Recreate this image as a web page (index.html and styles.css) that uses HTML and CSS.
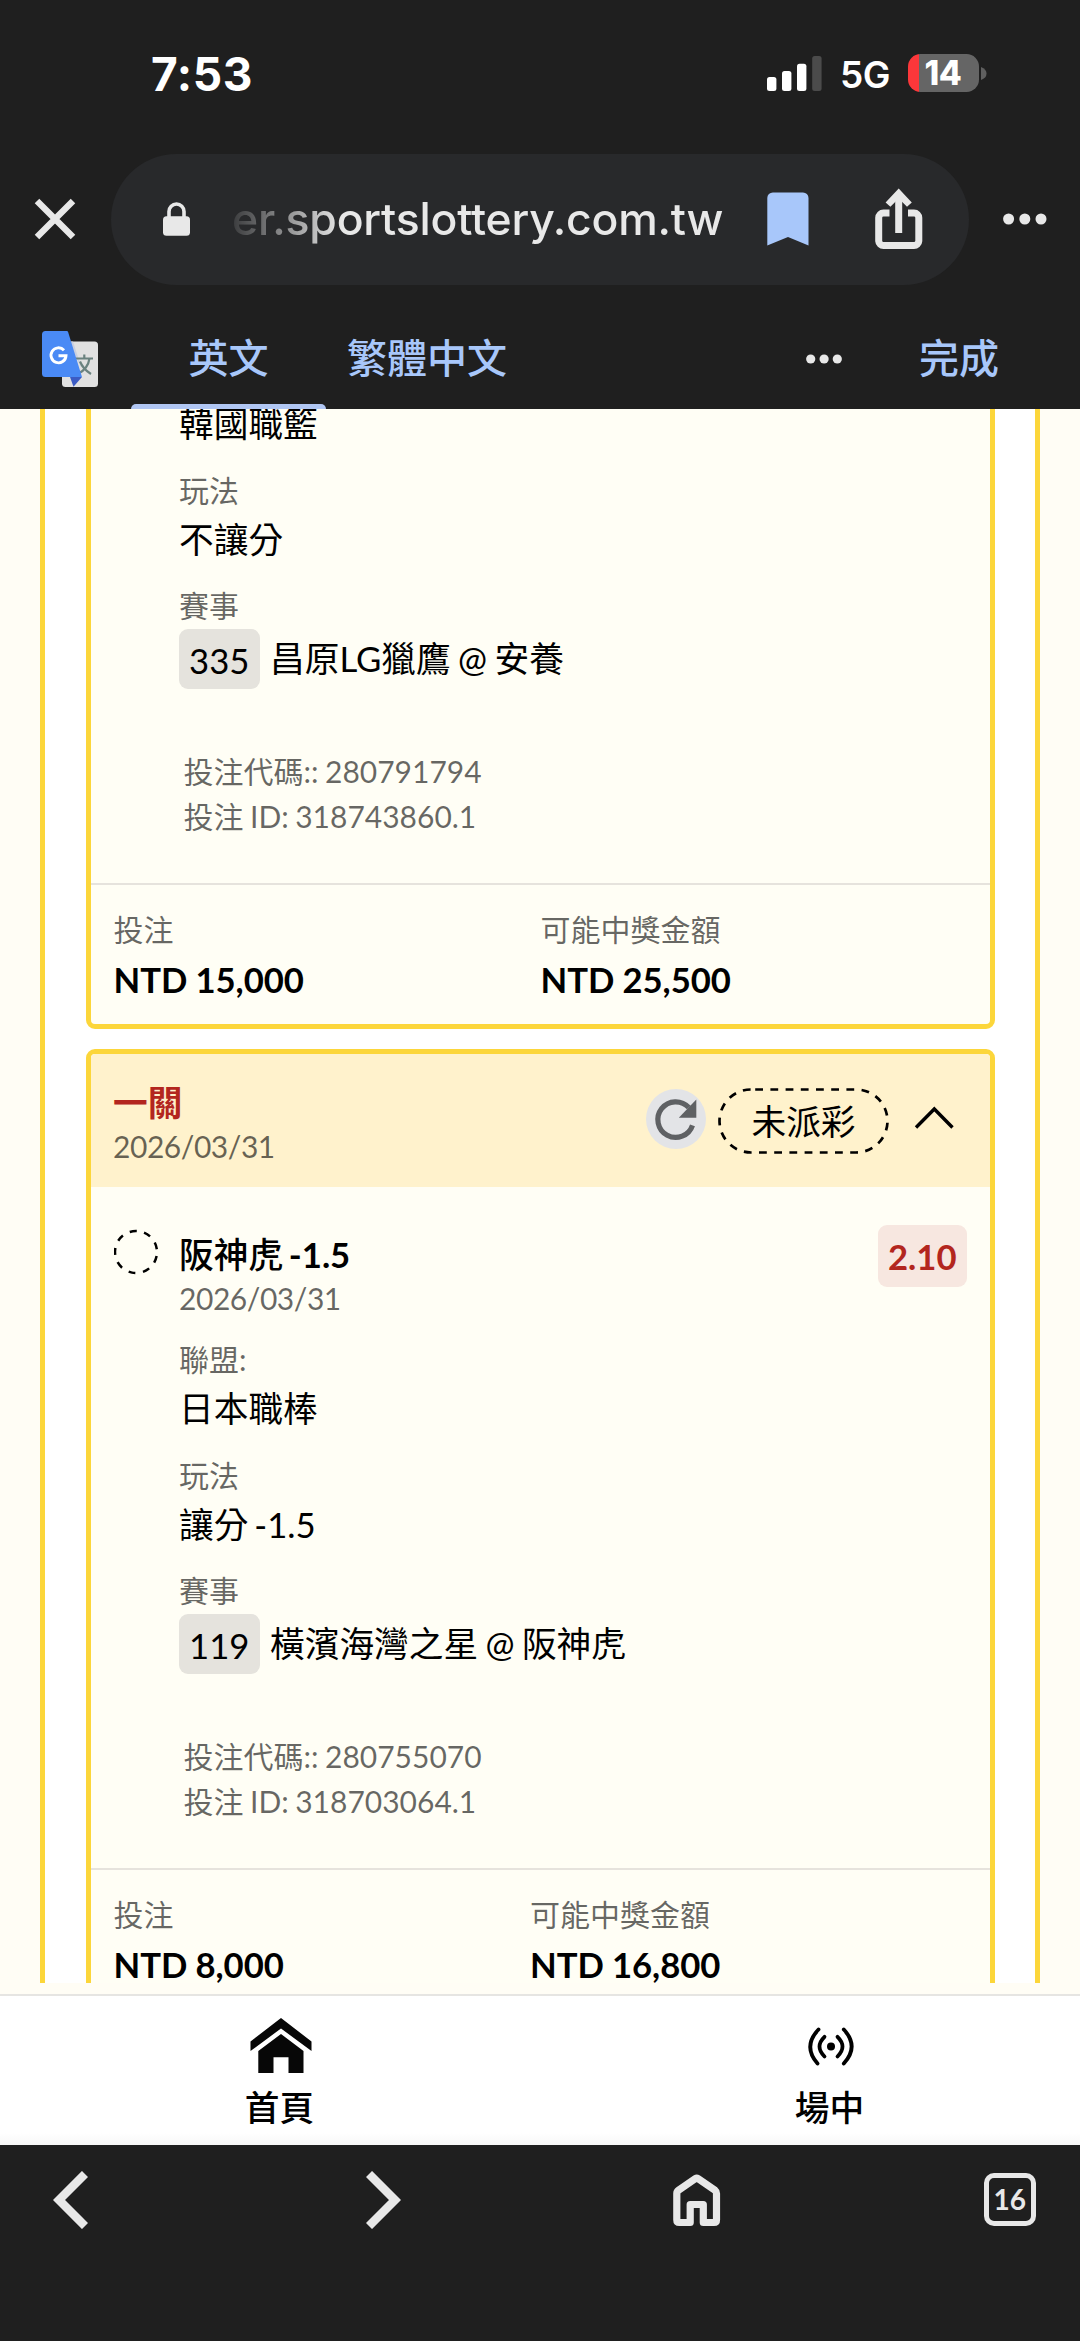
FILE: index.html
```html
<!DOCTYPE html>
<html lang="zh-Hant">
<head>
<meta charset="utf-8">
<title>投注紀錄</title>
<link rel="stylesheet" href="styles.css">
</head>
<body>
<div class="phone">
  <header class="chrome">
    <div class="status">
      <span class="time">7:53</span>
      <div class="status-right">
        <svg class="signal" width="55" height="35" viewBox="0 0 55 35"><g fill="#fff"><rect x="0" y="21" width="9.4" height="14" rx="2.5"/><rect x="15" y="15" width="9.4" height="20" rx="2.5"/><rect x="30" y="7.7" width="9.4" height="27.3" rx="2.5"/></g><rect x="45.2" y="0" width="9.4" height="35" rx="2.5" fill="#4b4b4b"/></svg>
        <span class="net">5G</span>
        <div class="battery"><span class="level">14</span></div>
        <svg class="cap" width="6" height="13" viewBox="0 0 6 13"><path d="M0 0Q5.500 2 5.500 6.500T0 13z" fill="#5f5f5f"/></svg>
      </div>
    </div>
    <div class="address">
      <svg class="close" width="42" height="42" viewBox="0 0 42 42"><path d="M3 3L39 39M39 3L3 39" stroke="#e8e8e8" stroke-width="6.400"/></svg>
      <div class="omnibox">
        <svg class="lock" width="27" height="34" viewBox="0 0 27 34"><path d="M6 16V9.500a7.500 7.500 0 0 1 15 0V16" fill="none" stroke="#e8e8e8" stroke-width="3.600"/><rect y="14.300" width="27" height="19.500" rx="3.500" fill="#e8e8e8"/></svg>
        <span class="url">er.sportslottery.com.tw</span>
        <svg class="bookmark" width="42" height="54" viewBox="0 0 42 54"><path d="M.3 53.500V6a5.500 5.500 0 0 1 5.500-5.500H36A5.500 5.500 0 0 1 41.500 6V53.500L21 45z" fill="#a8c7fa"/></svg>
        <svg class="share" width="48" height="62" viewBox="0 0 48 62"><g fill="none" stroke="#e8e8e8" stroke-width="7"><path d="M14.500 25H8.500a4.800 4.800 0 0 0-4.800 4.800V53a4.800 4.800 0 0 0 4.800 4.500H39a4.800 4.800 0 0 0 4.800-4.500V29.800A4.800 4.800 0 0 0 39 25H33"/><path d="M23.700 45V8"/></g><path d="M23.700.5L36.800 14.600 32 18.700 23.700 10.500 15.400 18.700 10.600 14.600z" fill="#e8e8e8"/></svg>
      </div>
      <svg class="more" width="44" height="12" viewBox="0 0 44 12" fill="#e8e8e8"><circle cx="5.600" cy="6" r="5.500"/><circle cx="21.800" cy="6" r="5.500"/><circle cx="38" cy="6" r="5.500"/></svg>
    </div>
    <div class="translate">
      <svg class="gt" width="56" height="56" viewBox="0 0 56 56"><rect x="20" y="10.500" width="36" height="45.500" rx="3.500" fill="#e1e1e1"/><path d="M28 46H40L31.500 55.800z" fill="#3b5bc4"/><path d="M26 10.500H31L39.500 37z" fill="#c9cfe0"/><path d="M33.500 27.500H51M42.300 23.500V27.500M36.500 42.500Q46 37.500 47.500 27.500M38 30.500Q41 38 49 43" fill="none" stroke="#6a827f" stroke-width="2.200"/><path d="M3.500 0H24.800a1.500 1.500 0 0 1 1.300 1L40 46H3.500A3.500 3.500 0 0 1 0 42.500V3.500A3.500 3.500 0 0 1 3.500 0z" fill="#4a8af5"/><path d="M22 19.200A7.500 7.500 0 1 0 24 24.800H16.500" fill="none" stroke="#fff" stroke-width="2.900"/></svg>
      <div class="tab active">英文</div>
      <div class="tab">繁體中文</div>
      <svg class="dots" width="36" height="10" viewBox="0 0 36 10" fill="#e8e8e8"><circle cx="4.700" cy="5" r="4.600"/><circle cx="18.100" cy="5" r="4.600"/><circle cx="31.300" cy="5" r="4.600"/></svg>
      <div class="done">完成</div>
    </div>
  </header>

  <main class="viewport">
    <div class="ledger">
      <section class="card scrolled">
        <div class="details">
          <div class="value">韓國職籃</div>
          <div class="label">玩法</div>
          <div class="value">不讓分</div>
          <div class="label">賽事</div>
          <div class="match"><span class="num">335</span><span>昌原LG獵鷹 @ 安養</span></div>
          <div class="codes"><div>投注代碼:: 280791794</div><div>投注 ID: 318743860.1</div></div>
        </div>
        <div class="totals">
          <div><div class="t-label">投注</div><div class="amount">NTD 15,000</div></div>
          <div><div class="t-label">可能中獎金額</div><div class="amount">NTD 25,500</div></div>
        </div>
      </section>

      <section class="card">
        <div class="card-head">
          <div class="head-text"><div class="kind">一關</div><div class="date">2026/03/31</div></div>
          <svg class="refresh" width="60" height="60" viewBox="0 0 60 60"><circle cx="30" cy="30" r="30" fill="#e3e4e7"/><path d="M46.500 36.300A17.800 17.800 0 1 1 42.800 18.600" fill="none" stroke="#5f6164" stroke-width="5.200"/><path d="M50.300 10.500V28.800H32.800z" fill="#5f6164"/></svg>
          <div class="state"><svg class="state-line" width="171" height="66" viewBox="0 0 171 66"><rect x="1.500" y="1.500" width="168" height="63" rx="31.500" fill="none" stroke="#000" stroke-width="2.700" stroke-dasharray="7.800 7.400" stroke-dashoffset="11"/></svg><span>未派彩</span></div>
          <svg class="chev" width="40" height="24" viewBox="0 0 40 24"><path d="M2 21.500L20.300 3 38.500 21.500" fill="none" stroke="#000" stroke-width="3.400"/></svg>
        </div>
        <div class="pick">
          <svg class="pending" width="44" height="46" viewBox="0 0 44 46"><circle cx="22" cy="23" r="21" fill="none" stroke="#000" stroke-width="2.500" stroke-dasharray="7 7.661" transform="rotate(11 22 23)"/></svg>
          <div class="pick-text"><div class="pick-name">阪神虎 <b>-1.5</b></div><div class="date">2026/03/31</div></div>
          <span class="odds">2.10</span>
        </div>
        <div class="details">
          <div class="label">聯盟:</div>
          <div class="value">日本職棒</div>
          <div class="label">玩法</div>
          <div class="value">讓分 -1.5</div>
          <div class="label">賽事</div>
          <div class="match"><span class="num">119</span><span>橫濱海灣之星 @ 阪神虎</span></div>
          <div class="codes"><div>投注代碼:: 280755070</div><div>投注 ID: 318703064.1</div></div>
        </div>
        <div class="totals narrow">
          <div><div class="t-label">投注</div><div class="amount">NTD 8,000</div></div>
          <div><div class="t-label">可能中獎金額</div><div class="amount">NTD 16,800</div></div>
        </div>
      </section>
    </div>
  </main>

  <nav class="site-nav">
    <div class="nav-item">
      <svg width="62" height="56" viewBox="0 0 62 56" fill="#070707"><path d="M31 0L61.500 23.500V33L31 10.500.5 33V23.500z"/><path d="M31 16L53.500 33V55H38.500V39.300H23.500V55H8.300V33z"/></svg>
      <span>首頁</span>
    </div>
    <div class="nav-item">
      <svg class="live" width="46" height="56" viewBox="0 0 46 56"><circle cx="23" cy="28.500" r="4" fill="#000"/><g fill="none" stroke="#000" stroke-width="3.800" stroke-linecap="round"><path d="M10.500 11.500Q-5.500 28.500 9.500 45.500"/><path d="M16.500 18.800Q6.500 28.500 16.500 38.500"/><path d="M35.800 11.500Q51.500 28.500 35.800 45.500"/><path d="M29.500 18.800Q39.500 28.500 29.500 38.500"/></g></svg>
      <span>場中</span>
    </div>
  </nav>

  <footer class="toolbar">
    <svg class="back" width="35" height="58" viewBox="0 0 35 58"><path d="M32 3L6 29 32 55" fill="none" stroke="#e8e8e8" stroke-width="8.600"/></svg>
    <svg class="fwd" width="35" height="58" viewBox="0 0 35 58"><path d="M3 3L29 29 3 55" fill="none" stroke="#e8e8e8" stroke-width="8.600"/></svg>
    <svg class="home" width="48" height="53" viewBox="0 0 48 53"><path d="M3.800 19.500V46Q3.800 48.500 6.300 48.500H17.200V30.500H30.300V48.500H41Q43.500 48.500 43.500 46V19.500Q43.500 17.500 42 16.300L24.900 4.500Q23.700 3.700 22.500 4.500L5.500 16.300Q3.800 17.500 3.800 19.500z" fill="none" stroke="#e8e8e8" stroke-width="7.200" stroke-linejoin="round"/></svg>
    <div class="tabs">16</div>
  </footer>
</div>
</body>
</html>
```

FILE: styles.css
```css
* { box-sizing: border-box; }
body { margin: 0; background: #1f1f1f; }
svg { display: block; flex: none; }
.phone {
  display: flex; flex-direction: column; width: 1080px; height: 2341px; overflow: hidden;
  background: #fffdf5; color: #000;
  font-family: Lato, "Noto Sans CJK TC", sans-serif; font-size: 34.7px;
}

/* browser chrome */
.chrome { flex: none; height: 409px; background: #1f1f1f; position: relative; z-index: 1; font-family: Inter, "Noto Sans CJK TC", sans-serif; }
.status { display: flex; align-items: center; justify-content: space-between; height: 146px; padding: 0 93px 0 151px; color: #fff; }
.time { font-size: 46px; font-weight: 700; line-height: 50px; letter-spacing: .6px; padding-top: 1px; }
.status-right { display: flex; align-items: center; }
.net { margin-left: 18px; font-size: 37px; font-weight: 600; line-height: 40px; letter-spacing: -.5px; width: 68px; padding-top: 3px; }
.battery { display: flex; justify-content: center; align-items: center; width: 71px; height: 38px; border-radius: 12.5px; background: linear-gradient(90deg, #fc373a 10.5px, #656565 10.5px); }
.level { font-size: 33.5px; font-weight: 800; line-height: 38px; padding-right: 1px; letter-spacing: -.4px; }
.cap { margin-left: 2px; }
.address { display: flex; align-items: center; height: 146px; padding-left: 34px; }
.omnibox { display: flex; align-items: center; width: 858px; height: 131px; margin-left: 35px; padding-left: 52px; border-radius: 65.5px; background: #28292b; }
.url {
  width: 496px; margin-left: 42px; white-space: nowrap; font-size: 44.5px; font-weight: 500; line-height: 56px; letter-spacing: -.18px; color: #e8e8e8;
  -webkit-mask-image: linear-gradient(90deg, rgba(0,0,0,.1), #000 110px); mask-image: linear-gradient(90deg, rgba(0,0,0,.1), #000 110px);
}
.bookmark { margin-left: 39px; }
.share { margin-left: 66px; }
.more { margin-left: 33.5px; }
.translate { display: flex; align-items: flex-end; height: 117px; padding-left: 42px; color: #a8c7fa; font-size: 40px; font-weight: 500; }
.gt { margin: 0 33px 22px 0; }
.tab { display: flex; justify-content: center; height: 117px; width: 195px; line-height: 134px; }
.tab.active { position: relative; }
.tab.active::after { content: ""; position: absolute; left: 0; right: 0; bottom: 0; height: 5px; border-radius: 5px 5px 0 0; background: #b0c6f3; }
.tab + .tab { width: 202px; }
.dots { margin: 0 0 45px 277.5px; }
.done { height: 117px; line-height: 134px; margin-left: 77.5px; }

/* page content */
.viewport { flex: none; height: 1574px; padding: 0 40px; overflow: hidden; }
.ledger { display: flex; flex-direction: column; gap: 20px; margin-top: -14.7px; padding: 0 40.5px; border: solid #fcd63a; border-width: 0 5px; background: #fff; }
.card { border: 5px solid #fcd63a; border-radius: 9px; background: #fffef5; overflow: hidden; }
.scrolled { border-radius: 0 0 9px 9px; }
.label, .t-label, .date { font-size: 30px; line-height: 44px; color: rgba(0,0,0,.6); }
.date { letter-spacing: -.45px; }
.details { padding-left: 88.5px; }
.label { position: relative; top: -.6px; margin-bottom: 2.6px; }
.value { line-height: 49px; margin-bottom: 20px; word-spacing: -3px; }
.match { display: flex; align-items: center; gap: 10.5px; height: 60.4px; margin-top: -1.6px; line-height: 62px; word-spacing: -1.5px; }
.num { width: 80.5px; height: 60.4px; border-radius: 9px; background: #e5e3dd; text-align: center; line-height: 63px; }
.codes { padding: 59.8px 0 43.8px 4.500px; font-size: 30px; line-height: 45.2px; color: rgba(0,0,0,.6); word-spacing: -1.2px; }
.totals { display: grid; grid-template-columns: 427px 1fr; padding: 21.6px 22px 19.5px 23px; border-top: 2.4px solid #e6e3dd; }
.totals.narrow { grid-template-columns: 416.5px 1fr; }
.amount { margin-top: 5.2px; line-height: 48px; font-weight: 700; white-space: nowrap; letter-spacing: -.08px; }
.card-head { display: flex; align-items: center; height: 133px; padding-left: 22.5px; background: #fff2cc; }
.head-text { width: 533px; padding-top: 7px; }
.kind { font-weight: 700; line-height: 44px; color: #b3261e; padding-top: 1px; margin-bottom: -1px; }
.refresh { margin-top: -3px; }
.state { display: flex; justify-content: center; width: 171px; height: 66px; margin-left: 12px; margin-top: 1px; position: relative; line-height: 67px; }
.state-line { position: absolute; inset: 0; }
.chev { margin: -5px 0 0 24.5px; }
.pick { display: flex; align-items: flex-start; padding: 38px 22.5px 0; height: 151px; }
.pending { margin: 4.5px 0 0 .5px; }
.pick-text { flex: 1; padding: 6px 0 0 21.5px; }
.pick-name { font-weight: 500; line-height: 47px; margin-bottom: -1.5px; word-spacing: -3px; }
.pick-name b { font-weight: 700; }
.odds { width: 89.5px; height: 62.5px; border-radius: 9px; background: #f7e7e0; color: #b3261e; font-weight: 700; line-height: 63px; text-align: center; }

/* site navigation */
.site-nav { flex: none; display: flex; justify-content: space-between; height: 151px; margin-top: 11px; padding: 22px 189px 0 218px; border-top: 2.5px solid #e6e5e2; background: linear-gradient(#fff 92%, #f7f7f7); font-weight: 500; }
.nav-item { display: flex; flex-direction: column; align-items: center; width: 123px; line-height: 67px; }
.nav-item svg { margin-left: 3px; }

/* browser toolbar */
.toolbar { flex: 1; display: flex; align-items: flex-start; padding: 26px 44px 0 53px; background: #1f1f1f; }
.fwd { margin-left: 278px; }
.home { margin: 3px 0 0 272px; }
.tabs { width: 53px; height: 53px; margin: 2px 0 0 262.5px; border: 5.5px solid #e8e8e8; border-radius: 10px; color: #e8e8e8; font: 700 28px/43px Lato, sans-serif; text-align: center; }
```
